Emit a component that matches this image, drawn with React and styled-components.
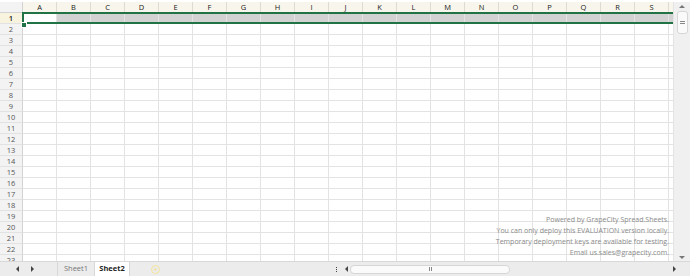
import React from "react";
import styled, { createGlobalStyle } from "styled-components";

const Global = createGlobalStyle`
  html, body { margin: 0; padding: 0; background: #fff; }
  body { font-family: "Open Sans", "Noto Sans", sans-serif; }
`;

const COLS = "ABCDEFGHIJKLMNOPQRST".split("");
const ROWS = Array.from({ length: 23 }, (_, i) => i + 1);
const ROW_H = 11;
const COL_W = 34;
const HDR_W = 23;

const Page = styled.div`
  padding-top: 2px;
  width: 690px;
`;

const Spread = styled.div`
  width: 690px;
  height: 274px;
  display: flex;
  flex-direction: column;
  overflow: hidden;
`;

const Main = styled.div`
  flex: 1;
  display: flex;
  min-height: 0;
`;

const GridArea = styled.div`
  position: relative;
  flex: 1;
  overflow: hidden;
`;

const Row = styled.div`
  display: flex;
  height: ${ROW_H}px;
`;

const Corner = styled.div`
  flex: none;
  width: ${HDR_W}px;
  height: ${ROW_H}px;
  box-sizing: border-box;
  background: #f3f3f3;
  border-right: 1px solid #d3d3d3;
  border-bottom: 1px solid #d3d3d3;
`;

const ColHeader = styled.div`
  flex: none;
  width: ${COL_W}px;
  height: ${ROW_H}px;
  box-sizing: border-box;
  background: #f8f6ec;
  border-right: 1px solid #dedcd0;
  border-bottom: 1px solid #d3d3d3;
  font-size: 7.5px;
  line-height: ${ROW_H - 1}px;
  text-align: center;
  color: #222;
`;

const RowHeader = styled.div`
  flex: none;
  width: ${HDR_W}px;
  height: ${ROW_H}px;
  box-sizing: border-box;
  background: ${(p) => (p.$active ? "#f8f3df" : "#f3f3f3")};
  border-right: 1px solid #d3d3d3;
  border-bottom: 1px solid #e2e2e2;
  font-size: 7.5px;
  line-height: ${ROW_H - 1}px;
  text-align: center;
  color: ${(p) => (p.$active ? "#222" : "#555")};
  font-weight: ${(p) => (p.$active ? 600 : 400)};
`;

const Cell = styled.div`
  flex: none;
  width: ${COL_W}px;
  height: ${ROW_H}px;
  box-sizing: border-box;
  border-right: 1px solid #e3e3e3;
  border-bottom: 1px solid #e3e3e3;
  background: ${(p) => (p.$sel ? "#d2d2d2" : "#fff")};
`;

const Selection = styled.div`
  position: absolute;
  left: ${HDR_W - 1}px;
  top: ${ROW_H - 1}px;
  right: -4px;
  height: ${ROW_H + 1}px;
  border: 2px solid #217346;
  box-sizing: border-box;
  pointer-events: none;
`;

const FillHandle = styled.div`
  position: absolute;
  left: ${HDR_W - 2}px;
  top: ${ROW_H * 2 - 2}px;
  width: 4px;
  height: 4px;
  background: #217346;
  border: 1px solid #fff;
  box-sizing: content-box;
`;

const Watermark = styled.div`
  position: absolute;
  right: 4px;
  bottom: 3px;
  text-align: right;
  font-family: "Open Sans", sans-serif;
  font-size: 7px;
  line-height: 11px;
  color: #8a8a8a;
  pointer-events: none;
`;

const VScroll = styled.div`
  flex: none;
  width: 17px;
  background: #f0f0f0;
  border-left: 1px solid #e4e4e4;
  box-sizing: border-box;
  display: flex;
  flex-direction: column;
  align-items: center;
  padding: 3px 0 2px;
`;

const Arrow = styled.div`
  width: 0;
  height: 0;
  flex: none;
  border-style: solid;
  ${(p) =>
    p.$dir === "up"
      ? "border-width: 0 3px 3px 3px; border-color: transparent transparent #777 transparent;"
      : p.$dir === "down"
      ? "border-width: 3px 3px 0 3px; border-color: #777 transparent transparent transparent;"
      : p.$dir === "left"
      ? "border-width: 3px 3px 3px 0; border-color: transparent #444 transparent transparent;"
      : "border-width: 3px 0 3px 3px; border-color: transparent transparent transparent #444;"}
`;

const VThumb = styled.div`
  margin-top: 3px;
  width: 11px;
  height: 23px;
  background: #fafafa;
  border: 1px solid #d6d6d6;
  border-radius: 3px;
  box-sizing: border-box;
  display: flex;
  align-items: center;
  justify-content: center;
`;

const VGrip = styled.div`
  width: 5px;
  height: 1px;
  border-top: 1px solid #888;
  border-bottom: 1px solid #888;
`;

const Spacer = styled.div`
  flex: 1;
`;

const TabBar = styled.div`
  flex: none;
  height: 15px;
  display: flex;
  align-items: stretch;
  background: #ececec;
  border-top: 1px solid #d8d8d8;
  box-sizing: border-box;
`;

const NavArea = styled.div`
  width: 57px;
  display: flex;
  align-items: center;
  padding-left: 16px;
  gap: 12px;
  box-sizing: border-box;
`;

const Tab = styled.div`
  width: ${(p) => p.$w}px;
  box-sizing: border-box;
  text-align: center;
  font-size: 7.5px;
  line-height: 13px;
  color: ${(p) => (p.$active ? "#222" : "#777")};
  font-weight: ${(p) => (p.$active ? 700 : 400)};
  background: ${(p) => (p.$active ? "#fff" : "#ececec")};
  border-right: 1px solid #d8d8d8;
  border-left: ${(p) => (p.$active ? "none" : "1px solid #d8d8d8")};
`;

const AddTab = styled.div`
  margin-left: 21px;
  align-self: center;
  width: 7px;
  height: 7px;
  border-radius: 50%;
  border: 1px solid #f3e59a;
  color: #f0dc7a;
  font-size: 7px;
  line-height: 7px;
  text-align: center;
`;

const Splitter = styled.div`
  margin-left: auto;
  width: 10px;
  display: flex;
  flex-direction: column;
  align-items: center;
  justify-content: center;
  gap: 1px;
  margin-right: 1px;
`;

const Dot = styled.div`
  width: 1px;
  height: 1px;
  background: #444;
`;

const HScroll = styled.div`
  width: 336px;
  display: flex;
  align-items: center;
  padding: 0 2px 0 3px;
  box-sizing: border-box;
  gap: 2px;
`;

const HTrack = styled.div`
  flex: 1;
  height: 10px;
  display: flex;
  align-items: center;
`;

const HThumb = styled.div`
  width: 160px;
  height: 9px;
  background: #fafafa;
  border: 1px solid #d6d6d6;
  border-radius: 4px;
  box-sizing: border-box;
  display: flex;
  align-items: center;
  justify-content: center;
`;

const HGrip = styled.div`
  width: 1px;
  height: 4px;
  border-left: 1px solid #888;
  border-right: 1px solid #888;
`;

const CornerBox = styled.div`
  width: 12px;
  flex: none;
`;

export default function App() {
  return (
    <Page>
      <Global />
      <Spread>
        <Main>
          <GridArea>
            <Row>
              <Corner />
              {COLS.map((c) => (
                <ColHeader key={c}>{c}</ColHeader>
              ))}
            </Row>
            {ROWS.map((r) => (
              <Row key={r}>
                <RowHeader $active={r === 1}>{r}</RowHeader>
                {COLS.map((c, i) => (
                  <Cell key={c} $sel={r === 1 && i > 0} />
                ))}
              </Row>
            ))}
            <Selection />
            <FillHandle />
            <Watermark>
              <div>Powered by GrapeCity Spread.Sheets.</div>
              <div>You can only deploy this EVALUATION version locally.</div>
              <div>Temporary deployment keys are available for testing.</div>
              <div>Email us.sales@grapecity.com.</div>
            </Watermark>
          </GridArea>
          <VScroll>
            <Arrow $dir="up" />
            <VThumb>
              <VGrip />
            </VThumb>
            <Spacer />
            <Arrow $dir="down" />
          </VScroll>
        </Main>
        <TabBar>
          <NavArea>
            <Arrow $dir="left" />
            <Arrow $dir="right" />
          </NavArea>
          <Tab $w={38}>Sheet1</Tab>
          <Tab $w={35} $active>
            Sheet2
          </Tab>
          <AddTab>+</AddTab>
          <Splitter>
            <Dot />
            <Dot />
            <Dot />
          </Splitter>
          <HScroll>
            <Arrow $dir="left" />
            <HTrack>
              <HThumb>
                <HGrip />
              </HThumb>
            </HTrack>
            <Arrow $dir="right" />
          </HScroll>
          <CornerBox />
        </TabBar>
      </Spread>
    </Page>
  );
}
